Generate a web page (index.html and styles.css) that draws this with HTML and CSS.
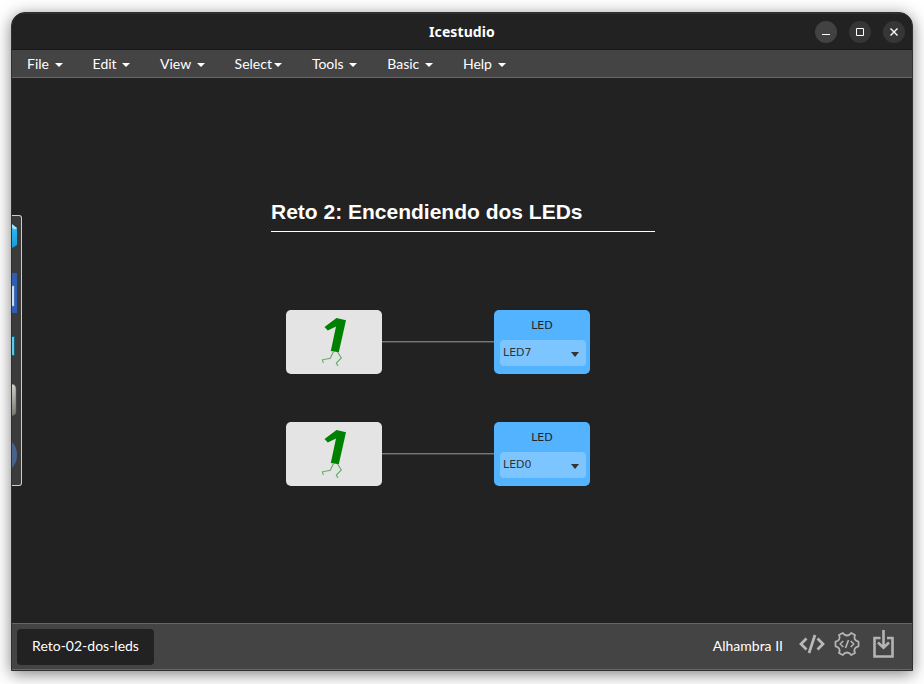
FILE: index.html
```html
<!DOCTYPE html>
<html lang="es">
<head>
<meta charset="utf-8">
<title>Icestudio</title>
<link rel="stylesheet" href="styles.css">
</head>
<body>
<div class="window">
  <header class="titlebar">
    <div class="title">Icestudio</div>
    <div class="controls">
      <span class="control minimize"><svg viewBox="0 0 22 22"><path d="M7 13.5h8"/></svg></span>
      <span class="control"><svg viewBox="0 0 22 22"><path d="M7.500 7.500h7v7h-7z"/></svg></span>
      <span class="control"><svg viewBox="0 0 22 22"><path d="M7.500 7.500l7 7M14.500 7.500l-7 7" stroke-width="1.400"/></svg></span>
    </div>
  </header>
  <nav class="menu">
    <span class="item file">File<i class="caret"></i></span>
    <span class="item edit">Edit<i class="caret"></i></span>
    <span class="item view">View<i class="caret"></i></span>
    <span class="item select">Select<i class="caret"></i></span>
    <span class="item tools">Tools<i class="caret"></i></span>
    <span class="item basic">Basic<i class="caret"></i></span>
    <span class="item help">Help<i class="caret"></i></span>
  </nav>
  <main class="canvas">
    <aside class="drawer">
      <svg viewBox="0 0 9 269" width="9" height="269">
        <defs>
          <linearGradient id="cube" x2="0" y2="1"><stop offset="0" stop-color="#35b9ee"/><stop offset="1" stop-color="#139bdb"/></linearGradient>
          <linearGradient id="metal" x2="0" y2="1"><stop offset="0" stop-color="#d0d0cc"/><stop offset="1" stop-color="#77776f"/></linearGradient>
        </defs>
        <path d="M0 9l5 3v17l-5 3z" fill="url(#cube)"/>
        <path d="M0 8l5 4-2 1.500L0 12z" fill="#a5e3fa"/>
        <path d="M0 57h5v40H0z" fill="#2f5eb1"/>
        <path d="M0 70h2v20H0z" fill="#e9edf3" stroke="#8da8d6" stroke-width=".5"/>
        <path d="M-1 120.500h3.500v19H-1z" fill="#65c5e2" stroke="#176176"/>
        <path d="M-1 168q5 0 5 5v23q0 3-5 4z" fill="url(#metal)" stroke="#64645f" stroke-width=".6"/>
        <path d="M0 226q5 5 5 13t-5 13z" fill="#48618d"/>
      </svg>
    </aside>
    <h1 class="heading">Reto 2: Encendiendo dos LEDs</h1>
    <div class="block bit one"><svg viewBox="0 0 96 64"><use href="#runner"/></svg></div>
    <div class="wire wire-one"></div>
    <div class="block led led-one"><div class="label">LED</div><div class="pin">LED7<i class="arrow"></i></div></div>
    <div class="block bit two"><svg viewBox="0 0 96 64"><use href="#runner"/></svg></div>
    <div class="wire wire-two"></div>
    <div class="block led led-two"><div class="label">LED</div><div class="pin">LED0<i class="arrow"></i></div></div>
    <svg class="defs"><defs><g id="runner">
      <path d="M50.500 8l9.500 2.300-7.200 32-8-1.300L50 16.500l-8.200 4L38.500 17z" fill="#008000"/>
      <path d="M47.500 41.500l-3.200 6.700-7.800 1.600.8 3M51.500 42l3.800 6-5 5 1.700 3" fill="none" stroke="#5fab5f" stroke-width="1.100"/>
    </g></defs></svg>
  </main>
  <footer class="footer">
    <div class="tab">Reto-02-dos-leds</div>
    <div class="board">Alhambra II</div>
    <svg class="code" viewBox="0 0 26 22"><path d="M7.500 5.500L2 11l5.500 5.500M18.500 5.500L24 11l-5.500 5.500M16 2l-6 18" fill="none" stroke="#b9b9b9" stroke-width="2.700"/></svg>
    <svg class="gear" viewBox="0 0 26 26"><g fill="none" stroke="#b4b4b4" stroke-linejoin="round"><path d="M8.800 2Q10.500 4.500 13 4.500T17.200 2L21 4Q19.800 6.500 20.800 8.300T24.500 10.700V15.300Q21.800 15.800 20.800 17.700T21 22L17.200 24Q15.500 21.500 13 21.500T8.800 24L5 22Q6.200 19.500 5.200 17.700T1.500 15.300V10.700Q4.200 10.200 5.200 8.300T5 4Z" stroke-width="1.800"/><path d="M9.200 10L6.200 13l3 3M16.800 10l3 3-3 3M14.500 9l-3 8" stroke-width="1.700"/></g></svg>
    <svg class="load" viewBox="0 0 22 28"><path d="M7.500 8H1.500v18.500h18V8H14M10.500 0v17.500M5 12.500l5.500 5.300 5.500-5.300" fill="none" stroke="#b4b4b4" stroke-width="2.600"/></svg>
  </footer>
</div>
</body>
</html>
```
FILE: styles.css
```css
* { box-sizing: border-box; }
body {
  margin: 0;
  height: 684px;
  padding: 12px 11px 13px;
  overflow: hidden;
  background: #fff;
  font-family: Lato, sans-serif;
  color: #fff;
}
.window {
  width: 902px;
  height: 659px;
  display: flex;
  flex-direction: column;
  border: 1px solid #303030;
  border-radius: 14px 14px 0 0;
  overflow: hidden;
  background: #222;
  box-shadow: 0 3px 16px rgba(0, 0, 0, .5);
}
.titlebar {
  height: 37px;
  flex: none;
  display: grid;
  grid-template-columns: 1fr auto 1fr;
  align-items: center;
  border-top: 1px solid #303030;
  border-bottom: 1px solid #181818;
}
.title {
  grid-column: 2;
  font: bold 14px/20px "Noto Sans", sans-serif;
  letter-spacing: .1px;
}
.controls {
  display: flex;
  justify-content: flex-end;
  gap: 12px;
  padding-right: 7px;
}
.control {
  width: 22px;
  height: 22px;
  border-radius: 50%;
  background: #363636;
}
.minimize { background: #424242; }
.control svg {
  display: block;
  fill: none;
  stroke: #fff;
}
.menu {
  height: 28px;
  flex: none;
  display: flex;
  gap: 30px;
  padding-left: 15px;
  background: #444;
  border-bottom: 1px solid #666;
  font-size: 14px;
  line-height: 27px;
}
.item {
  display: flex;
  align-items: center;
  justify-content: space-between;
}
.file { width: 35.6px; }
.edit { width: 37.4px; }
.view { width: 44.6px; }
.select { width: 47.3px; }
.tools { width: 45.4px; }
.basic { width: 45.7px; }
.help { width: 43px; }
.caret {
  flex: none;
  margin-top: 2px;
  border: 4px solid transparent;
  border-top-color: #fff;
  border-bottom: 0;
}
.canvas {
  flex: 1;
  position: relative;
  background: #222;
}
.drawer {
  position: absolute;
  left: 0;
  top: 137px;
  width: 10px;
  height: 271px;
  border: 1px solid #ccc;
  border-left: 0;
  border-radius: 0 3px 3px 0;
  background: #3b3b3b;
}
.drawer svg { display: block; }
.heading {
  position: absolute;
  left: 259px;
  top: 121px;
  width: 384px;
  height: 33px;
  margin: 0;
  border-bottom: 1px solid #fff;
  font: bold 21px/26px "Liberation Sans", sans-serif;
}
.block {
  position: absolute;
  width: 96px;
  height: 64px;
  border-radius: 5px;
}
.bit { left: 274px; background: #e4e4e4; }
.bit svg { display: block; }
.one, .led-one { top: 232px; }
.two, .led-two { top: 344px; }
.wire {
  position: absolute;
  left: 370px;
  width: 112px;
  height: 2px;
  background: linear-gradient(#777 50%, #444 50%);
}
.wire-one { top: 263px; }
.wire-two { top: 375px; }
.led {
  left: 482px;
  padding: 6px 4px 8px 6px;
  background: #53b3ff;
  color: #222;
  font: 11px/20px "DejaVu Sans", sans-serif;
}
.label { height: 24px; padding-right: 2px; text-align: center; }
.pin {
  height: 26px;
  display: flex;
  align-items: center;
  justify-content: space-between;
  padding: 0 7px 0 3px;
  border-radius: 4px;
  background: #7cc5ff;
  color: #333;
}
.arrow {
  margin-top: 3px;
  border: 4px solid transparent;
  border-top: 5px solid #333;
  border-bottom: 0;
}
.defs { position: absolute; width: 0; height: 0; }
.footer {
  height: 47px;
  flex: none;
  display: flex;
  align-items: flex-start;
  padding: 5px 17px 0 5px;
  background: #444;
  border-top: 1px solid #666;
  border-bottom: 1px solid #666;
  font-size: 14px;
  line-height: 34px;
}
.tab {
  width: 137px;
  height: 36px;
  border-radius: 4px;
  background: #222;
  text-align: center;
}
.board { margin-left: auto; }
.code { width: 26px; height: 22px; margin: 4px 0 0 16px; }
.gear { width: 26px; height: 26px; margin: 2px 0 0 9px; }
.load { width: 22px; height: 28px; margin: 1px 0 0 13px; }
```
